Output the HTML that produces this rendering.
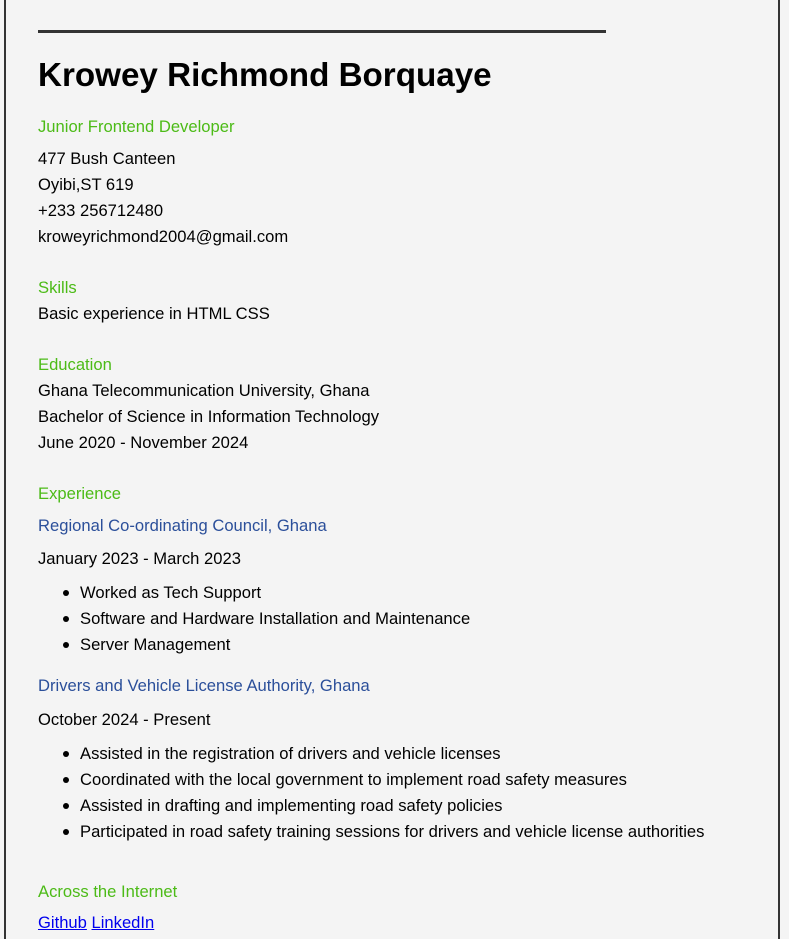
<!DOCTYPE html>
<html><head><style>
html,body{margin:0;padding:0;width:789px;height:939px;overflow:hidden;background:#f4f4f4;}
body{font-family:"Liberation Sans",Arial,sans-serif;font-size:16.6px;color:#000;position:relative;}
.frame{position:absolute;left:4px;top:-2px;width:772px;height:950px;border-left:2px solid #333;border-right:2px solid #333;}
.rule{position:absolute;left:38px;top:30px;width:568px;height:3px;background:#333;}
.t{position:absolute;left:38px;line-height:26px;white-space:nowrap;margin-top:2px;}
.g{color:#4cbb17;}
.b{color:#2b4f9a;}
.li{left:80px;}
.li:before{content:"";position:absolute;left:-17px;top:10px;width:6px;height:6px;border-radius:50%;background:#000;}
h1{position:absolute;left:38px;top:56px;margin:0;font-size:33.2px;line-height:40px;font-weight:bold;}
a{color:#00e;text-decoration:underline;}
</style></head><body>
<div class="frame"></div>
<div class="rule"></div>
<h1>Krowey Richmond Borquaye</h1>
<div class="t g" style="top:112px">Junior Frontend Developer</div>
<div class="t" style="top:144px">477 Bush Canteen</div>
<div class="t" style="top:170px">Oyibi,ST 619</div>
<div class="t" style="top:196px">+233 256712480</div>
<div class="t" style="top:222px">kroweyrichmond2004@gmail.com</div>
<div class="t g" style="top:273px">Skills</div>
<div class="t" style="top:299px">Basic experience in HTML CSS</div>
<div class="t g" style="top:350px">Education</div>
<div class="t" style="top:376px">Ghana Telecommunication University, Ghana</div>
<div class="t" style="top:402px">Bachelor of Science in Information Technology</div>
<div class="t" style="top:428px">June 2020 - November 2024</div>
<div class="t g" style="top:479px">Experience</div>
<div class="t b" style="top:511px">Regional Co-ordinating Council, Ghana</div>
<div class="t" style="top:544px">January 2023 - March 2023</div>
<div class="t li" style="top:578px">Worked as Tech Support</div>
<div class="t li" style="top:604px">Software and Hardware Installation and Maintenance</div>
<div class="t li" style="top:630px">Server Management</div>
<div class="t b" style="top:671px">Drivers and Vehicle License Authority, Ghana</div>
<div class="t" style="top:705px">October 2024 - Present</div>
<div class="t li" style="top:739px">Assisted in the registration of drivers and vehicle licenses</div>
<div class="t li" style="top:765px">Coordinated with the local government to implement road safety measures</div>
<div class="t li" style="top:791px">Assisted in drafting and implementing road safety policies</div>
<div class="t li" style="top:817px">Participated in road safety training sessions for drivers and vehicle license authorities</div>
<div class="t g" style="top:877px">Across the Internet</div>
<div class="t" style="top:908px"><a>Github</a> <a>LinkedIn</a></div>
</body></html>
